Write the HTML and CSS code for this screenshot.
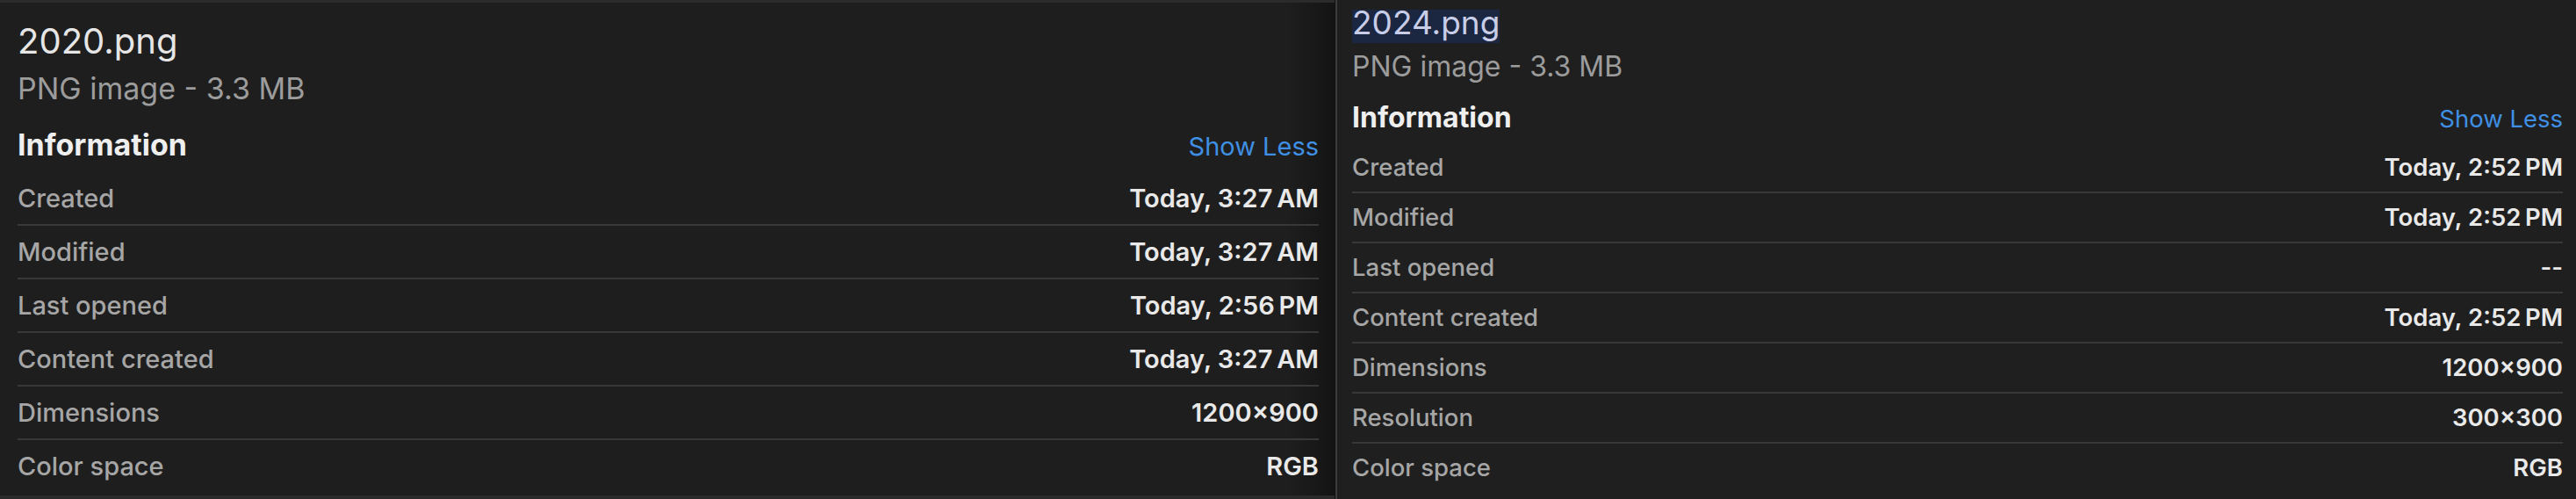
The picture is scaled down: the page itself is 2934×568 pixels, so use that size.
FILE: index.html
```html
<!DOCTYPE html>
<html lang="en">
<head>
  <meta charset="UTF-8">
  <title>Get Info - 2020.png / 2024.png</title>
  <link rel="stylesheet" href="styles.css">
</head>
<body>

  <!-- Older file, larger window -->
  <div class="panel panel-big">
    <div class="title"><span class="name">2020.png</span></div>
    <div class="kind">PNG image - 3.3 MB</div>
    <div class="section-head">
      <span class="heading">Information</span>
      <a class="toggle">Show Less</a>
    </div>
    <div class="row"><span class="label">Created</span><span class="value">Today, 3:27&#8239;AM</span></div>
    <div class="row"><span class="label">Modified</span><span class="value">Today, 3:27&#8239;AM</span></div>
    <div class="row"><span class="label">Last opened</span><span class="value">Today, 2:56&#8239;PM</span></div>
    <div class="row"><span class="label">Content created</span><span class="value">Today, 3:27&#8239;AM</span></div>
    <div class="row"><span class="label">Dimensions</span><span class="value">1200×900</span></div>
    <div class="row"><span class="label">Color space</span><span class="value">RGB</span></div>
  </div>

  <div class="divider"></div>

  <!-- Newer file, name selected -->
  <div class="panel panel-small">
    <div class="title"><span class="name selected">2024.png</span></div>
    <div class="kind">PNG image - 3.3 MB</div>
    <div class="section-head">
      <span class="heading">Information</span>
      <a class="toggle">Show Less</a>
    </div>
    <div class="row"><span class="label">Created</span><span class="value">Today, 2:52&#8239;PM</span></div>
    <div class="row"><span class="label">Modified</span><span class="value">Today, 2:52&#8239;PM</span></div>
    <div class="row"><span class="label">Last opened</span><span class="value">--</span></div>
    <div class="row"><span class="label">Content created</span><span class="value">Today, 2:52&#8239;PM</span></div>
    <div class="row"><span class="label">Dimensions</span><span class="value">1200×900</span></div>
    <div class="row"><span class="label">Resolution</span><span class="value">300×300</span></div>
    <div class="row"><span class="label">Color space</span><span class="value">RGB</span></div>
  </div>

</body>
</html>
```

FILE: styles.css
```css
html, body {
  margin: 0;
  height: 568px;
  overflow: hidden;
}
body {
  display: flex;
  background-color: #1f1f1f;
  font-family: Inter, "Noto Sans", sans-serif;
  -webkit-font-smoothing: antialiased;
}
.panel {
  box-sizing: border-box;
  height: 568px;
}
.title {
  display: flex;
}
.name {
  color: #e6e6e6;
  white-space: nowrap;
}
.kind {
  color: #9c9c9c;
  white-space: nowrap;
}
.section-head {
  display: flex;
  justify-content: space-between;
  align-items: baseline;
}
.heading {
  color: #efefef;
  font-weight: 700;
}
.toggle {
  color: #3f8fe3;
  cursor: pointer;
}
.row {
  display: flex;
  justify-content: space-between;
  border-bottom: 2px solid #383838;
}
.row:last-child {
  border-bottom: none;
}
.label {
  color: #a6a6a6;
  font-weight: 500;
}
.value {
  color: #e9e9e9;
  font-weight: 600;
}

/* left window */
.panel-big {
  width: 1520px;
  padding: 0 18px 0 20px;
  background-color: #1e1e1e;
  border-top: 3px solid #2b2b2b;
  border-bottom: 4px solid #2a2a2a;
  background-image: linear-gradient(to right, rgba(0,0,0,0) 96.5%, rgba(0,0,0,0.35) 100%);
}
.panel-big .name {
  font-size: 40px;
  line-height: 50px;
  padding-top: 19px;
}
.panel-big .kind {
  font-size: 34px;
  line-height: 57px;
}
.panel-big .section-head {
  padding-top: 5px;
  height: 62px;
  line-height: 62px;
  font-size: 34px;
}
.panel-big .toggle {
  font-size: 29px;
}
.panel-big .row {
  height: 59px;
  line-height: 59px;
  font-size: 29px;
}

.divider {
  width: 3px;
  height: 568px;
  background-color: #3c3c3c;
  border-left: 1px solid #111;
  box-sizing: border-box;
}

/* right window */
.panel-small {
  flex: 1;
  padding: 11px 15px 0 17px;
}
.panel-small .name {
  font-size: 37px;
  line-height: 29px;
  padding-bottom: 9px;
}
.panel-small .selected {
  color: #c8cde8;
  background-color: #1b2640;
}
.panel-small .kind {
  font-size: 32px;
  line-height: 53px;
}
.panel-small .section-head {
  padding-top: 3px;
  height: 58px;
  line-height: 58px;
  font-size: 32px;
}
.panel-small .toggle {
  font-size: 27.5px;
}
.panel-small .row {
  height: 55px;
  line-height: 55px;
  font-size: 27.5px;
}
```
